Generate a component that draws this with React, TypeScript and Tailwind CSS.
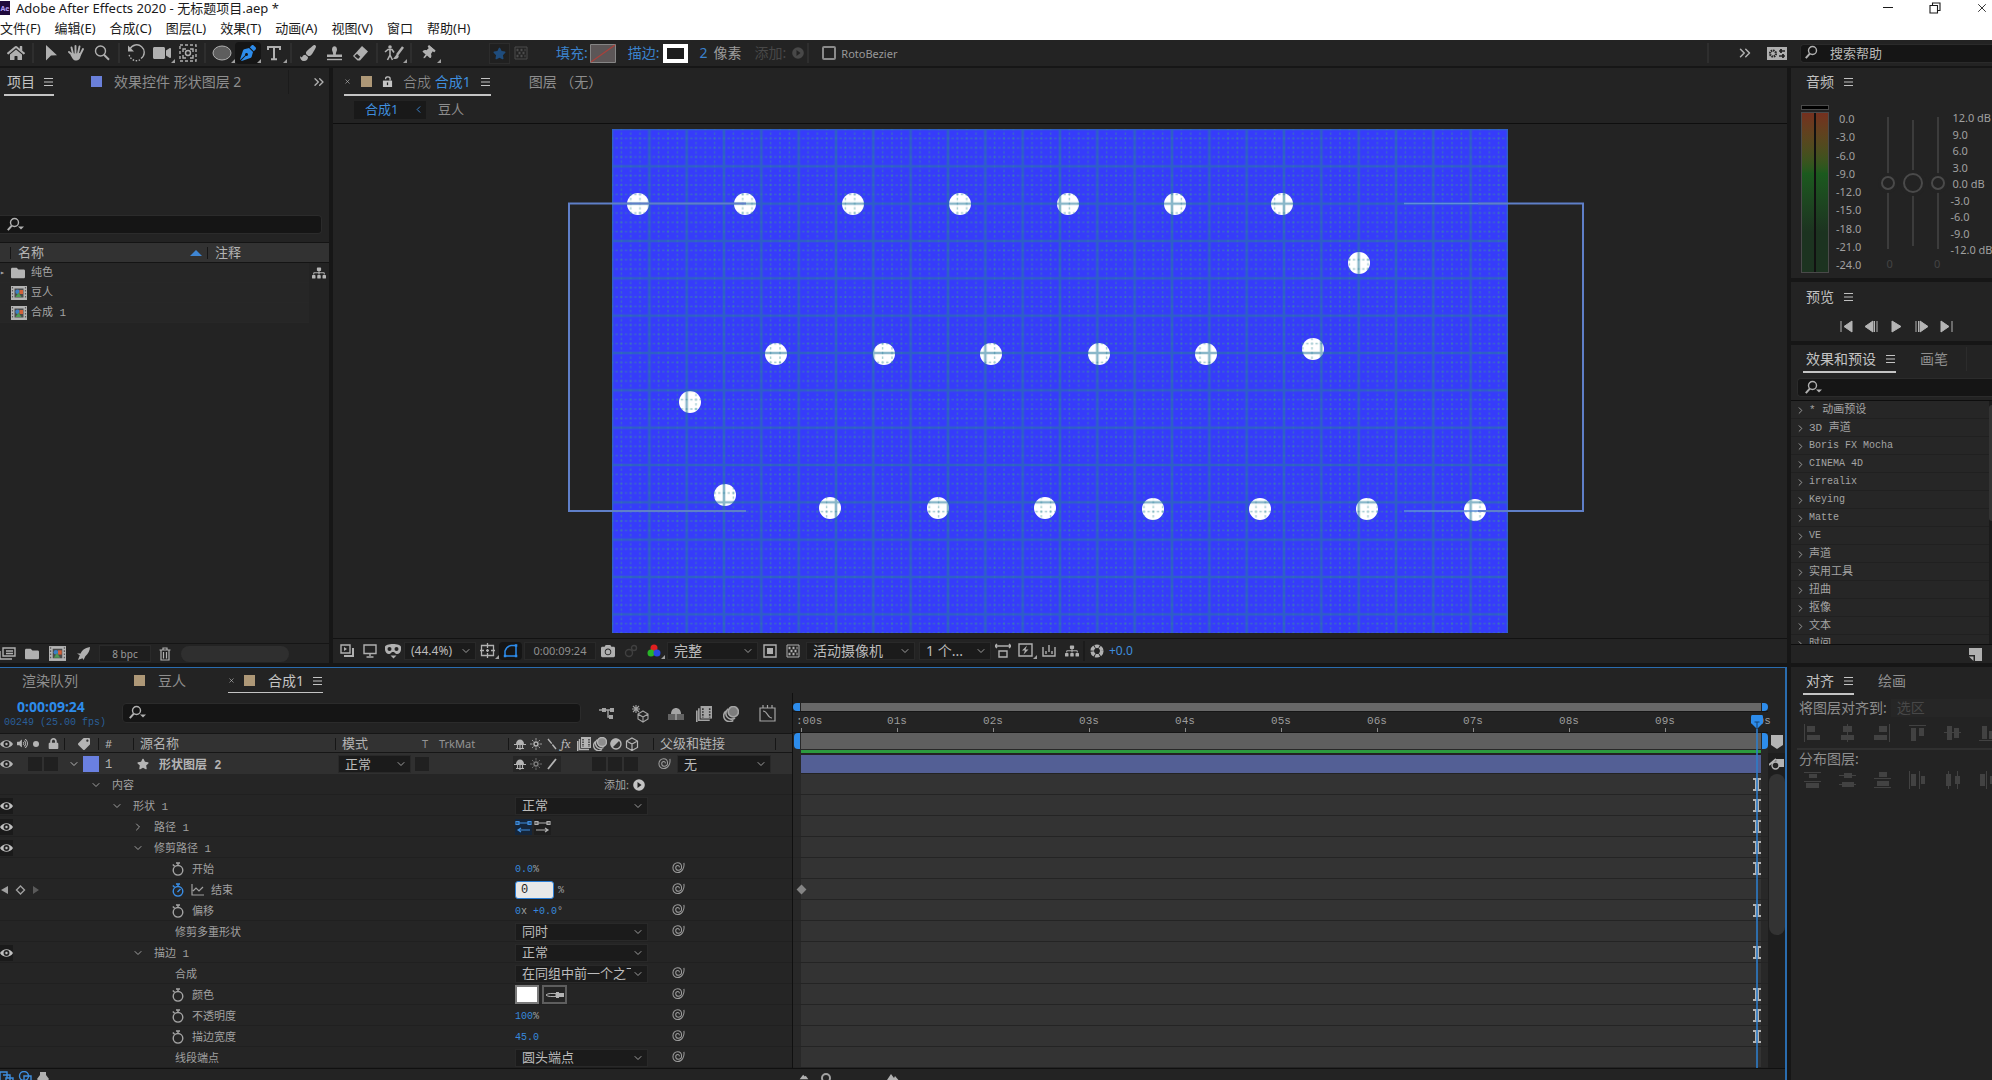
import { useState } from "react";
import type { ReactNode } from "react";
import { ChevronDown, ChevronRight, ChevronsRight, X } from "lucide-react";
import {
  FaCamera,
  FaFolder,
  FaHome,
  FaLock,
  FaPaintBrush,
  FaPenNib,
  FaSitemap,
  FaStar,
  FaTag,
  FaThumbtack,
  FaVideo,
  FaVolumeUp,
} from "react-icons/fa";

const FPS = 25;
const DURATION_FRAMES = 250;
const CURRENT_FRAME = 249;

// ────────── Icons ──────────

type IconProps = { className?: string };

function Icon({
  children,
  className = "size-4",
  box = "0 0 16 16",
}: {
  children: ReactNode;
  className?: string;
  box?: string;
}) {
  return (
    <svg viewBox={box} className={`shrink-0 ${className}`} fill="none" stroke="currentColor" strokeWidth="1.4" aria-hidden="true">
      {children}
    </svg>
  );
}

const MenuIcon = () => (
  <Icon className="size-[10px]" box="0 0 10 10">
    <path d="M0 1.5h9M0 5h9M0 8.5h9" strokeWidth="1.2" />
  </Icon>
);

const SearchIcon = ({ caret = false }: { caret?: boolean }) => (
  <Icon className="h-4 w-[18px]" box="0 0 18 16">
    <circle cx="7.5" cy="5.5" r="4" />
    <path d="M4.8 8.6 0.8 13.2" strokeWidth="2" />
    {caret && <path d="M11 9.5h6l-3 3z" fill="currentColor" stroke="none" />}
  </Icon>
);

const CompIcon = ({ className = "h-[14px] w-4" }: IconProps) => (
  <Icon className={className} box="0 0 16 14">
    <path d="M0 0h16v14H0z" fill="#b4b4b4" stroke="none" />
    <path d="M1.5 1v12M14.5 1v12" stroke="#5a5a5a" strokeWidth="1.2" strokeDasharray="1.5 1.5" />
    <path d="M3.5 2.5h9v9h-9z" fill="#4a4a4a" stroke="none" />
    <circle cx="6.5" cy="5.8" r="2.2" fill="#3b7fc4" stroke="none" />
    <path d="M8.5 4h3.5v4H8.5z" fill="#d2603a" stroke="none" />
    <path d="m7.5 6.5 3 4.5h-6z" fill="#4d9a55" stroke="none" />
  </Icon>
);

const EyeIcon = () => (
  <Icon className="h-3 w-[13px]" box="0 0 14 12">
    <path d="M0 6c3-5.5 11-5.5 14 0-3 5.5-11 5.5-14 0z" fill="currentColor" stroke="none" />
    <circle cx="7" cy="6" r="3.2" fill="#232323" stroke="none" />
    <circle cx="7" cy="6" r="1.3" fill="currentColor" stroke="none" />
  </Icon>
);

const StopwatchIcon = ({ active = false }: { active?: boolean }) => (
  <Icon className={active ? "size-[14px] text-[#3a8ee6]" : "size-[14px] text-[#a4a4a4]"} box="0 0 14 14">
    <circle cx="7" cy="8.3" r="4.8" />
    <path d="M7 3.5V1M5 1h4M1.8 2.5l1.8 1.8" />
    {active && <path d="m6.5 9 3-3" />}
  </Icon>
);

const PickwhipIcon = () => (
  <Icon className="size-[13px] text-[#9c9c9c]" box="0 0 14 14">
    <path
      d="M12.8 2c.9 5-2 10.5-6.6 10.5C3 12.500 1 10.200 1 7.200S3.200 2 6 2s4.300 2 4.300 4.500S8.600 10 6.800 10 4 8.900 4 7.200s1.100-2.400 2.200-2.400 1.800.8 1.600 2"
      strokeWidth="1.1"
    />
  </Icon>
);

const ShyIcon = () => (
  <Icon className="size-[14px]" box="0 0 14 14">
    <path d="M3 7c0-6 8-6 8 0z" fill="currentColor" stroke="none" />
    <path d="M1 7.5h12M7 7v6M3 11.5h8M4.5 8v4M9.5 8v4" strokeWidth="1.1" />
  </Icon>
);

const SunIcon = () => (
  <Icon className="size-[12px]" box="0 0 12 12">
    <circle cx="6" cy="6" r="2" />
    <path d="M6 0v2.5M6 9.5V12M0 6h2.5M9.5 6H12M2 2l1.5 1.5M8.5 8.5 10 10M2 10l1.5-1.5M8.5 3.5 10 2" strokeWidth="0.8" />
  </Icon>
);

const FrameBlendIcon = ({ className = "size-[14px]" }: IconProps) => (
  <Icon className={className} box="0 0 14 14">
    <path d="M4 0h10v11H4z" fill="currentColor" stroke="none" />
    <path d="M6 2v8M12 2v8" stroke="#323232" strokeDasharray="1.5 1" />
    <path d="M2.500 2v10.500H12M.7 4v10" />
  </Icon>
);

const MotionBlurIcon = ({ className = "size-[14px]" }: IconProps) => (
  <Icon className={className} box="0 0 14 14">
    <circle cx="9" cy="5" r="4.5" fill="currentColor" fillOpacity="0.7" />
    <path d="M4.500 2.500a5 5 0 0 0 6 8M2.500 4.500a5 5 0 0 0 6.500 8" />
  </Icon>
);

const CubeIcon = () => (
  <Icon className="size-[14px]" box="0 0 14 14">
    <path d="m7 1 5.500 3v6.500L7 13.500l-5.500-3V4zM1.500 4 7 7l5.500-3M7 7v6.500" strokeWidth="1.2" />
  </Icon>
);

const FlowIcon = () => <FaSitemap className="size-[14px] shrink-0" />;

const CheckerIcon = () => (
  <Icon className="size-[14px]" box="0 0 14 14">
    <path d="M1 1h12v12H1z" strokeWidth="1" />
    <path d="M2.500 4h9M2.500 10h9" strokeDasharray="2 2" strokeWidth="2.5" />
    <path d="M4.500 7h6" strokeDasharray="2 2" strokeWidth="2.5" />
  </Icon>
);

// ────────── Shared controls ──────────

function Sep() {
  return <span className="mx-[3px] h-5 w-[2px] shrink-0 bg-[#2e2e2e]" />;
}

function Tool({
  label,
  children,
  active = false,
  more = false,
  narrow = false,
}: {
  label: string;
  children: ReactNode;
  active?: boolean;
  more?: boolean;
  narrow?: boolean;
}) {
  return (
    <button
      aria-label={label}
      className={`relative flex shrink-0 items-center justify-center rounded-sm ${narrow ? "h-[18px] w-[23px]" : "h-[22px] w-[26px]"} ${
        active ? "bg-[#151515] text-[#2d8ceb]" : "text-[#b0b0b0]"
      }`}
    >
      {children}
      {more && (
        <svg viewBox="0 0 4 4" className="absolute right-0 bottom-[1px] size-1" fill="#a0a0a0" aria-hidden="true">
          <path d="M4 0v4H0z" />
        </svg>
      )}
    </button>
  );
}

function Select({
  label,
  options,
  className = "",
  textClass = "text-[13px]",
}: {
  label: string;
  options: string[];
  className?: string;
  textClass?: string;
}) {
  return (
    <div className={`relative flex h-[18px] shrink-0 items-center border border-[#292929] bg-[#1b1b1b] font-sans ${className}`}>
      <select aria-label={label} className={`h-full w-full appearance-none overflow-hidden bg-transparent pr-4 pl-[6px] leading-none text-[#bcbcbc] outline-none ${textClass}`}>
        {options.map((o) => (
          <option key={o}>{o}</option>
        ))}
      </select>
      <ChevronDown className="pointer-events-none absolute right-[3px] size-3 text-[#9c9c9c]" />
    </div>
  );
}

function PanelTab({ children, active = false, className = "" }: { children: ReactNode; active?: boolean; className?: string }) {
  return (
    <button
      className={`flex h-full shrink-0 items-center border-b-2 pt-px text-[14px] leading-none whitespace-nowrap ${
        active ? "border-[#c4c4c4] text-[#c4c4c4]" : "border-transparent text-[#8e8e8e]"
      } ${className}`}
    >
      {children}
    </button>
  );
}

// ────────── Window chrome ──────────

const menus = ["文件(F)", "编辑(E)", "合成(C)", "图层(L)", "效果(T)", "动画(A)", "视图(V)", "窗口", "帮助(H)"];

function TitleBar() {
  return (
    <header className="flex h-10 shrink-0 flex-col overflow-hidden bg-white text-[#1a1a1a]">
      <div className="flex h-4 items-center">
        <span className="flex h-[14px] w-[10px] items-center justify-center bg-[#1f0a3c] text-[7px] leading-none font-bold text-[#b29cf0]">
          Ae
        </span>
        <h1 className="ml-[6px] flex-1 text-[13px] leading-4 whitespace-nowrap">
          Adobe After Effects 2020 - 无标题项目.aep *
        </h1>
        <button aria-label="最小化" className="w-[47px]">
          <Icon className="mx-auto size-3" box="0 0 12 12">
            <path d="M1 5.500h10" strokeWidth="1" />
          </Icon>
        </button>
        <button aria-label="还原" className="w-[47px]">
          <Icon className="mx-auto size-3" box="0 0 12 12">
            <path d="M1 3.500h7.500V11H1zM3.500 3V1H11v7.500H9" strokeWidth="1.1" />
          </Icon>
        </button>
        <button aria-label="关闭" className="flex w-[34px] justify-center pl-[14px]">
          <X className="size-[14px]" strokeWidth={1.5} />
        </button>
      </div>
      <nav className="flex h-6 items-center gap-[14px] pt-px text-[13px] leading-none">
        {menus.map((m) => (
          <button key={m} className="whitespace-nowrap">
            {m}
          </button>
        ))}
      </nav>
    </header>
  );
}

function Toolbar() {
  return (
    <div className="flex h-7 shrink-0 items-center border-b-2 border-[#161616] bg-[#232323] pl-[3px]">
      <Tool label="主页"><FaHome className="size-[18px]" /></Tool>
      <Sep />
      <Tool label="选取工具">
        <Icon>
          <path d="m4 0 11 10.300-6 .3L4 15.500z" fill="currentColor" stroke="none" />
        </Icon>
      </Tool>
      <Tool label="手形工具">
        <Icon>
          <path d="M5 9 3.500 2.500M7.500 8V1M10 8.500 11.500 1.500M12 10l3-6M5.500 11 1 7" strokeWidth="1.9" strokeLinecap="round" />
          <path d="M4 8.500 12.500 8c.8 3-.5 7.500-4 7.500-3.500 0-4-2-6-5.500z" fill="currentColor" stroke="none" />
        </Icon>
      </Tool>
      <Tool label="缩放工具">
        <Icon>
          <circle cx="6.5" cy="6" r="5" />
          <path d="m10 9.800 5 5" strokeWidth="2" />
        </Icon>
      </Tool>
      <Sep />
      <Tool label="旋转工具">
        <Icon className="size-[18px]" box="0 0 18 18">
          <path d="M3 5a7.500 7.500 0 1 1 11 9.500" />
          <path d="M13 15.800A7.500 7.500 0 0 1 2 10" strokeDasharray="1.5 1.5" />
          <path d="M1 1.500v6h6z" fill="currentColor" stroke="none" />
        </Icon>
      </Tool>
      <Tool label="摄像机工具" more><FaVideo className="size-[18px]" /></Tool>
      <Tool label="锚点工具">
        <Icon className="size-[18px]" box="0 0 18 18">
          <path d="M1 1h16v16H1z" strokeDasharray="3 2" />
          <path d="M4 8V5h3M11 5h3v3M14 11v3h-3M7 14H4v-3" />
          <circle cx="9" cy="9" r="2.5" />
        </Icon>
      </Tool>
      <Sep />
      <Tool label="椭圆工具" more>
        <Icon className="h-4 w-5" box="0 0 20 16">
          <ellipse cx="10" cy="8" rx="9" ry="7" fill="#5e5e5e" strokeWidth="1" />
        </Icon>
      </Tool>
      <Tool label="钢笔工具" active more><FaPenNib className="size-[16px]" /></Tool>
      <Tool label="文字工具" more>
        <Icon>
          <path d="M2 5V2h12v3M8 2v12M5 14.300h6" strokeWidth="2" />
        </Icon>
      </Tool>
      <Sep />
      <Tool label="画笔工具"><FaPaintBrush className="size-[16px]" /></Tool>
      <Tool label="仿制图章工具">
        <Icon className="size-[17px]" box="0 0 17 17">
          <path d="M6 4.500C6 0 11 0 11 4.500 11 6.500 9.800 7 9.800 9.500H16V12H1V9.500h6.200C7.200 7 6 6.500 6 4.500z" fill="currentColor" stroke="none" />
          <path d="M1 14.500h15" />
        </Icon>
      </Tool>
      <Tool label="橡皮擦工具">
        <Icon className="size-[17px]" box="0 0 17 17">
          <path d="m10 1 6 5.500-8 9H5.500L1 11z" fill="currentColor" stroke="none" />
          <path d="m2.500 11 2.500-2.300 3.200 3-2 2.300z" fill="#232323" stroke="none" />
        </Icon>
      </Tool>
      <Sep />
      <Tool label="Roto 笔刷工具" more>
        <Icon className="h-4 w-5" box="0 0 20 16">
          <circle cx="6" cy="2" r="1.8" fill="currentColor" stroke="none" />
          <path d="M1 7l3-2.500h4l2 3M6 5v5l-2.500 5M6 10l2.500 5" strokeWidth="1.6" />
          <path d="m19 2-6 8" strokeWidth="2.5" />
          <path d="M13.500 9.500c-2 0-2.500 3-4.500 4 3 1.500 5.500 0 5.800-2.500z" fill="currentColor" stroke="none" />
        </Icon>
      </Tool>
      <Sep />
      <Tool label="操控点工具" more><FaThumbtack className="size-[14px] rotate-[40deg]" /></Tool>

      <span className="ml-[26px]"><Sep /></span>
      <span className="ml-4 flex size-[21px] items-center justify-center border border-[#2c2c2c] bg-[#202020] text-[#1f4c7c]">
        <FaStar className="size-[13px]" />
      </span>
      <span className="ml-1 text-[#4c4c4c]"><CheckerIcon /></span>
      <span className="ml-[18px]"><Sep /></span>
      <button className="ml-1 text-[14px] leading-none text-[#3b82cc]">填充:</button>
      <button aria-label="填充颜色" className="ml-[2px] shrink-0">
        <svg viewBox="0 0 26 19" className="h-[19px] w-[26px]" aria-hidden="true">
          <path d="M.5.5h25v18H.5z" fill="#5c5657" stroke="#858585" />
          <path d="M1 18 25 1" stroke="#a8413b" strokeWidth="1.3" />
        </svg>
      </button>
      <button className="ml-3 text-[14px] leading-none text-[#3b82cc]">描边:</button>
      <button aria-label="描边颜色" className="ml-[3px] h-[19px] w-[25px] shrink-0 border-4 border-white bg-[#1c1c1c]" />
      <span className="ml-3 flex gap-[6px] text-[14px] leading-none text-[#9c9c9c]">
        <b className="font-normal text-[#3b82cc]">2</b>像素
      </span>
      <span className="ml-[13px] flex items-center gap-[6px] text-[14px] leading-none text-[#484848]">
        添加:
        <svg viewBox="0 0 12 12" className="size-3" aria-hidden="true">
          <circle cx="6" cy="6" r="5.8" fill="#484848" />
          <path d="m4.500 3 4 3-4 3z" fill="#232323" />
        </svg>
      </span>
      <Sep />
      <label className="ml-[10px] flex items-center gap-[5px] text-[11px] leading-none text-[#989898]">
        <input type="checkbox" className="size-[14px] appearance-none rounded-[2px] border-2 border-[#8a8a8a] bg-transparent" />
        RotoBezier
      </label>

      <span className="ml-auto" />
      <Sep />
      <button aria-label="更多工作区" className="ml-6 text-[#b0b0b0]"><ChevronsRight className="size-[18px]" /></button>
      <span className="ml-[3px]"><Sep /></span>
      <button aria-label="工作区" className="ml-1">
        <svg viewBox="0 0 20 13" className="h-[13px] w-5" aria-hidden="true">
          <path d="M0 0h20v13H0z" fill="#b0b0b0" />
          <circle cx="6" cy="6.5" r="3" fill="none" stroke="#232323" strokeWidth="2.2" strokeDasharray="1.6 0.7" />
          <path d="M12 4h6M12 9h6" stroke="#232323" strokeWidth="1.3" />
          <path d="M14 2v4M16 7v4" stroke="#232323" strokeWidth="1.8" />
        </svg>
      </button>
      <label className="ml-[13px] flex h-[19px] w-[192px] items-center gap-[7px] rounded-l-sm border border-r-0 border-[#2a2a2a] bg-[#151515] pl-1 text-[#b0b0b0]">
        <SearchIcon />
        <input aria-label="搜索帮助" placeholder="搜索帮助" className="w-full bg-transparent text-[13px] leading-none outline-none placeholder:text-[#b8b8b8]" />
      </label>
    </div>
  );
}

// ────────── Project panel ──────────

function ProjectPanel() {
  return (
    <section className="flex w-[329px] shrink-0 flex-col bg-[#232323]">
      <div className="flex h-7 items-center">
        <PanelTab active className="ml-1 gap-[9px] pl-[3px]">项目 <MenuIcon /></PanelTab>
        <PanelTab className="ml-[37px]">
          <span className="mr-3 size-[11px] bg-[#6a80da]" />
          效果控件 形状图层 2
        </PanelTab>
        <span className="ml-auto h-6 w-px bg-[#1b1b1b]" />
        <button aria-label="更多面板" className="mr-[2px] ml-[22px] text-[#b0b0b0]"><ChevronsRight className="size-4" /></button>
      </div>
      <label className="mt-[119px] mr-[7px] flex h-[19px] items-center rounded-r-sm border border-l-0 border-[#2b2b2b] bg-[#151515] pl-[7px] text-[#b0b0b0]">
        <SearchIcon caret />
        <input aria-label="搜索项目" className="w-full bg-transparent text-[12px] outline-none" />
      </label>
      <div className="mt-2 flex h-[21px] items-center border-y border-[#141414] bg-[#323232] text-[13px] leading-none text-[#b4b4b4]">
        <span className="ml-[10px] h-3 w-px bg-[#161616]" />
        <span className="ml-[7px] w-[172px]">名称</span>
        <svg viewBox="0 0 12 6" className="h-[6px] w-3" fill="#3f86d4" aria-hidden="true">
          <path d="m6 0 6 6H0z" />
        </svg>
        <span className="ml-[5px] h-3 w-px bg-[#161616]" />
        <span className="ml-[7px]">注释</span>
      </div>
      <div className="flex flex-1">
        <ul className="w-[309px] font-mono text-[11px] leading-none text-[#a4a4a4]">
          <li className="flex h-5 items-center gap-[6px] border-b border-[#272727] bg-[#262626]">
            <span className="w-[5px] text-[8px]">▸</span>
            <FaFolder className="size-[14px] text-[#b4b4b4]" />
            <span className="pt-px">纯色</span>
          </li>
          <li className="flex h-5 items-center gap-1 border-b border-[#272727] bg-[#262626] pl-[11px]">
            <CompIcon /> <span className="pt-[2px]">豆人</span>
          </li>
          <li className="flex h-5 items-center gap-1 border-b border-[#272727] bg-[#262626] pl-[11px]">
            <CompIcon /> <span className="pt-[2px]">合成 1</span>
          </li>
        </ul>
        <span className="mt-[3px] ml-[3px] text-[#b4b4b4]"><FlowIcon /></span>
      </div>
      <div className="flex h-5 shrink-0 items-center border-t border-[#151515] text-[#b0b0b0]">
        <button aria-label="解释素材" className="w-[22px]">
          <Icon className="h-[13px] w-4" box="0 0 16 13">
            <path d="M3 1h12v8H3zM0 4v8h12" />
            <path d="M6 4h7M6 6.500h7" />
          </Icon>
        </button>
        <button aria-label="新建文件夹" className="flex w-5 justify-center"><FaFolder className="size-[14px]" /></button>
        <button aria-label="新建合成" className="ml-[7px] w-[22px]"><CompIcon className="h-[15px] w-[17px]" /></button>
        <button aria-label="项目设置" className="ml-[6px] w-5">
          <Icon className="size-[13px]" box="0 0 14 14">
            <path d="M14 0C8 1 5 4 4 7H0l3 2-2 5 5-2 1 2 2-4c3-3 5-6 5-10z" fill="currentColor" stroke="none" />
          </Icon>
        </button>
        <button className="ml-[2px] h-[17px] w-[52px] border border-[#2a2a2a] bg-[#1e1e1e] text-[10px] leading-none text-[#9a9a9a]">8 bpc</button>
        <button aria-label="删除" className="ml-2">
          <Icon className="h-[14px] w-3" box="0 0 12 14">
            <path d="M.5 3h11M4 3V1h4v2M2 3.500V13h8V3.500M4.500 5v6.500M7.500 5v6.500" strokeWidth="1.2" />
          </Icon>
        </button>
        <span className="ml-[10px] h-4 w-[108px] rounded-full bg-[#2f2f2f]" />
      </div>
    </section>
  );
}

// ────────── Composition viewer ──────────

const COMP_W = 896;
const COMP_H = 504;
const GRID = COMP_W / 24;

const beads: [number, number][] = [
  [26, 75], [133, 75], [241, 75], [348, 75], [456, 75], [563, 75], [670, 75],
  [747, 134],
  [164, 225], [272, 225], [379, 225], [487, 225], [594, 225], [701, 220],
  [78, 273],
  [113, 366], [218, 379], [326, 379], [433, 379], [541, 380], [648, 380], [755, 380], [863, 381],
];

function GridOverlay() {
  const q = GRID / 4;
  return (
    <>
      <defs>
        <pattern id="comp-grid" width={GRID} height={GRID} patternUnits="userSpaceOnUse">
          {[1, 2, 3].map((i) => (
            <path
              key={i}
              d={`M${i * q} 0V${GRID}M0 ${i * q}H${GRID}`}
              stroke="#3c909c"
              strokeOpacity="0.5"
              strokeDasharray={`${q / 4} ${q / 4}`}
              strokeDashoffset={q / 8}
              strokeWidth="1.3"
            />
          ))}
          <path d={`M0 0V${GRID}M0 0H${GRID}M${GRID} 0V${GRID}M0 ${GRID}H${GRID}`} stroke="#287c9c" strokeOpacity="0.55" strokeWidth="2.6" />
        </pattern>
      </defs>
      <rect width={COMP_W} height={COMP_H} fill="url(#comp-grid)" />
    </>
  );
}

function CompositionViewer() {
  return (
    <section className="flex min-w-0 flex-1 flex-col bg-[#232323]">
      <div className="flex h-7 items-center">
        <PanelTab active className="ml-[11px] gap-[10px]">
          <X className="size-[7px]" />
          <span className="size-[11px] bg-[#ae9877]" />
          <Icon className="size-[11px]" box="0 0 12 12">
            <path d="M1 5h10v7H1z" fill="currentColor" stroke="none" />
            <path d="M4 3.500V2.500C4 .3 8.800.3 8.800 2.500V5" />
            <path d="M6 7v3" stroke="#232323" />
          </Icon>
          <span className="font-light text-[#9c9c9c]">
            合成 <span className="font-normal text-[#3f8ede]">合成1</span>
          </span>
          <MenuIcon />
        </PanelTab>
        <PanelTab className="ml-[38px]">图层 （无）</PanelTab>
      </div>
      <div className="flex h-[28px] shrink-0 items-center border-b border-[#0e0e0e] pl-[21px] text-[13px] leading-none">
        <button className="flex h-[18px] w-[72px] items-center justify-between bg-[#191919] pr-[2px] pl-[11px] text-[#3f8ede]">
          合成1 <ChevronDown className="size-[11px] rotate-90" />
        </button>
        <button className="ml-3 text-[#8e8e8e]">豆人</button>
      </div>
      <div className="min-h-0 flex-1 overflow-hidden">
        <svg viewBox="-279 -5 1454 514" className="h-full w-full" role="img" aria-label="合成 1">
          <rect width={COMP_W} height={COMP_H} fill="#363cfa" />
          {beads.map(([x, y]) => (
            <circle key={`${x}-${y}`} cx={x} cy={y} r="11" fill="#fff" />
          ))}
          <GridOverlay />
          <path d="M134 74.500H-43V382H134M866 74.500H971V382H866" fill="none" stroke="#5f7fc8" strokeWidth="2" />
          <path d="M792 74.500H866M792 382H866" stroke="#5f8fd8" strokeWidth="1.5" />
        </svg>
      </div>
      <ViewerBar />
    </section>
  );
}

function ViewerBar() {
  return (
    <div className="flex h-[25px] shrink-0 items-center border-t border-[#121212] pb-px pl-[2px] text-[#b0b0b0]">
      <Tool narrow label="始终预览此视图">
        <Icon className="size-[14px]" box="0 0 14 14">
          <path d="M1 1h9v8H1z" />
          <path d="m4 3 3 2-3 2zM12 4v7H4v2h10V4z" fill="currentColor" stroke="none" />
        </Icon>
      </Tool>
      <Tool narrow label="主查看器">
        <Icon className="size-[14px]" box="0 0 14 14">
          <path d="M1 1h12v8.500H1zM7 9.500V12M3.500 13h7" />
        </Icon>
      </Tool>
      <Tool narrow label="VR 视图">
        <Icon className="size-4">
          <path d="M0 4c0-4 16-4 16 0v3c-1 5-5 5-7 2H7c-2 3-6 3-7-2z" fill="currentColor" stroke="none" />
          <circle cx="4.5" cy="6" r="2" fill="#232323" stroke="none" />
          <circle cx="11.5" cy="6" r="2" fill="#232323" stroke="none" />
          <path d="M5.500 12.500h6l-3 3z" fill="currentColor" stroke="none" />
        </Icon>
      </Tool>
      <Select label="放大率" options={["(44.4%)"]} className="w-[72px]" textClass="text-[12px]" />
      <Tool narrow label="网格和参考线" more>
        <Icon className="size-[15px]" box="0 0 15 15">
          <path d="M1.500 2.500h12v10h-12zM7.500 0v5M7.500 10v5M0 7.500h4M11 7.500h4M6 7.500h3M7.500 6v3" strokeWidth="1.3" />
        </Icon>
      </Tool>
      <Tool narrow label="切换蒙版和形状路径可见性" active>
        <Icon>
          <path d="M2 13V8c1-3 3-5 6-5.500h5V13z" strokeWidth="1.5" />
          <path d="M.8 11.800h2.500v2.500H.8zM11.800 11.800h2.500v2.500h-2.500zM11.800 1.200h2.500v2.500h-2.500z" fill="currentColor" stroke="none" />
        </Icon>
      </Tool>
      <button className="ml-[2px] h-[18px] w-[72px] shrink-0 border border-[#292929] bg-[#1e1e1e] text-[11px] leading-none text-[#909090]">0:00:09:24</button>
      <Tool narrow label="拍摄快照"><FaCamera className="size-[14px]" /></Tool>
      <Tool narrow label="显示快照">
        <Icon className="size-[14px] text-[#404040]" box="0 0 14 14">
          <circle cx="5" cy="9" r="3.5" />
          <circle cx="10" cy="4" r="2.5" />
        </Icon>
      </Tool>
      <Tool narrow label="显示通道" more>
        <svg viewBox="0 0 14 14" className="size-[14px]" aria-hidden="true">
          <circle cx="7" cy="4" r="3.5" fill="#e02020" />
          <circle cx="4" cy="9" r="3.5" fill="#28b428" />
          <circle cx="10" cy="9" r="3.5" fill="#2848e0" />
        </svg>
      </Tool>
      <Select label="分辨率" options={["完整"]} className="ml-[2px] w-[91px]" textClass="text-[14px]" />
      <Tool narrow label="目标区域">
        <Icon className="size-[14px]" box="0 0 14 14">
          <path d="M1 1h12v12H1z" />
          <path d="M4 4h6v6H4z" fill="currentColor" stroke="none" />
        </Icon>
      </Tool>
      <Tool narrow label="切换透明网格"><CheckerIcon /></Tool>
      <Select label="3D 视图" options={["活动摄像机"]} className="ml-[2px] w-[109px]" textClass="text-[14px]" />
      <Select label="视图布局" options={["1 个..."]} className="ml-1 w-[72px]" textClass="text-[14px]" />
      <Tool narrow label="像素长宽比校正">
        <Icon>
          <path d="M4 8h8v6H4zM0 3h16M2 1 0 3l2 2M14 1l2 2-2 2" />
        </Icon>
      </Tool>
      <Tool narrow label="快速预览" more>
        <Icon className="size-[15px]" box="0 0 15 15">
          <path d="M1 1h13v12H1z" />
          <path d="m9 2.500-5 5h3l-1.500 4 5-5h-3z" fill="currentColor" stroke="none" />
        </Icon>
      </Tool>
      <Tool narrow label="时间轴">
        <Icon className="size-[14px]" box="0 0 14 14">
          <path d="M1 3v9h12V3M4 7v3M7 1v7M10 7v3" />
        </Icon>
      </Tool>
      <Tool narrow label="合成流程图"><FlowIcon /></Tool>
      <span className="h-5 w-[2px] bg-[#1b1b1b]" />
      <Tool narrow label="重置曝光度">
        <Icon className="size-[14px]" box="0 0 14 14">
          <circle cx="7" cy="7" r="4.8" strokeWidth="3.6" strokeDasharray="4.2 0.8" />
        </Icon>
      </Tool>
      <span className="ml-px text-[12px] leading-none text-[#3f8ede]">+0.0</span>
    </div>
  );
}

// ────────── Timeline ──────────

type Row = {
  label: string;
  indent: string;
  twirl?: "open" | "closed";
  eye?: boolean;
  watch?: "idle" | "active";
  whip?: boolean;
  beam?: boolean;
  value?: ReactNode;
};

const Num = ({ children }: { children: ReactNode }) => <span className="text-[#3789de]">{children}</span>;

const rows: Row[] = [
  {
    label: "内容",
    indent: "pl-[30px]",
    twirl: "open",
    beam: true,
    value: (
      <button className="ml-[89px] flex items-center gap-1 font-sans text-[11px] text-[#a4a4a4]">
        添加:
        <svg viewBox="0 0 12 12" className="size-3" aria-hidden="true">
          <circle cx="6" cy="6" r="5.8" fill="#c4c4c4" />
          <path d="m4.500 3 4 3-4 3z" fill="#232323" />
        </svg>
      </button>
    ),
  },
  { label: "形状 1", indent: "pl-[51px]", twirl: "open", eye: true, beam: true, value: <Select label="形状模式" options={["正常"]} className="w-[133px]" /> },
  {
    label: "路径 1",
    indent: "pl-[72px]",
    twirl: "closed",
    eye: true,
    beam: true,
    value: (
      <span className="flex gap-[2px]">
        <Icon className="h-4 w-[17px] bg-[#14253a] text-[#3f8ede]" box="0 0 17 16">
          <path d="M2 4h13M3 11h12M6 9l-3 2 3 2M1 2.500h3v3H1zM13 2.500h3v3h-3z" strokeWidth="1.2" />
        </Icon>
        <Icon className="h-4 w-[17px] bg-[#1e1e1e] text-[#b0b0b0]" box="0 0 17 16">
          <path d="M2 4h13M2 11h12M11 9l3 2-3 2M1 2.500h3v3H1zM13 2.500h3v3h-3z" strokeWidth="1.2" />
        </Icon>
      </span>
    ),
  },
  { label: "修剪路径 1", indent: "pl-[72px]", twirl: "open", eye: true, beam: true },
  { label: "开始", indent: "pl-[111px]", watch: "idle", whip: true, beam: true, value: <span className="pt-[2px]"><Num>0.0</Num>%</span> },
  { label: "结束", indent: "pl-[111px]", watch: "active", whip: true, value: <EndInput /> },
  { label: "偏移", indent: "pl-[111px]", watch: "idle", whip: true, beam: true, value: <span className="pt-[2px]"><Num>0</Num>x <Num>+0.0</Num>°</span> },
  { label: "修剪多重形状", indent: "pl-[115px]", whip: true, value: <Select label="修剪多重形状" options={["同时"]} className="w-[133px]" /> },
  { label: "描边 1", indent: "pl-[72px]", twirl: "open", eye: true, beam: true, value: <Select label="描边模式" options={["正常"]} className="w-[133px]" /> },
  { label: "合成", indent: "pl-[115px]", whip: true, value: <Select label="合成" options={["在同组中前一个之下"]} className="w-[133px]" /> },
  {
    label: "颜色",
    indent: "pl-[111px]",
    watch: "idle",
    whip: true,
    beam: true,
    value: (
      <span className="flex gap-[3px]">
        <button aria-label="描边颜色" className="h-[19px] w-6 border-2 border-[#7a7a7a] bg-white" />
        <button aria-label="吸管" className="flex h-[19px] w-[25px] items-center justify-center border-2 border-[#5e5e5e] text-[#b4b4b4]">
          <Icon className="h-2 w-5" box="0 0 20 8">
            <path d="M1 4c2-2 6-1.500 10-1.500v3C7 5.500 3 6 1 4z" strokeWidth="1" />
            <path d="M11 1h3v1h5v4h-5v1h-3z" fill="currentColor" stroke="none" />
          </Icon>
        </button>
      </span>
    ),
  },
  { label: "不透明度", indent: "pl-[111px]", watch: "idle", whip: true, beam: true, value: <span className="pt-[2px]"><Num>100</Num>%</span> },
  { label: "描边宽度", indent: "pl-[111px]", watch: "idle", whip: true, beam: true, value: <span className="pt-[2px]"><Num>45.0</Num></span> },
  { label: "线段端点", indent: "pl-[115px]", whip: true, value: <Select label="线段端点" options={["圆头端点"]} className="w-[133px]" /> },
];

function EndInput() {
  const [end, setEnd] = useState("0");
  return (
    <label className="flex items-center gap-1">
      <input
        aria-label="结束"
        value={end}
        onChange={(e) => setEnd(e.target.value)}
        className="h-[18px] w-[39px] rounded-[3px] border border-[#2d7fd6] bg-[#e8e8e8] pl-[5px] text-[12px] text-[#222] outline-none"
      />
      <span className="pt-[2px]">%</span>
    </label>
  );
}

function PropertyRow({ row }: { row: Row }) {
  return (
    <div className="flex h-[21px] items-center border-b border-[#202020] pt-px font-mono text-[11px] leading-none text-[#a0a0a0]">
      <div className="flex w-[60px] shrink-0 items-center gap-[6px]">
        {row.eye && <span className="flex h-4 w-[13px] items-center bg-[#1a1a1a] text-[#c0c0c0]"><EyeIcon /></span>}
        {row.watch === "active" && (
          <Icon className="h-[10px] w-10" box="0 0 40 10">
            <path d="M8 1v8L1 5z" fill="currentColor" stroke="none" />
            <path d="m20.500 1 4 4-4 4-4-4z" />
            <path d="M33 1v8l6-4z" fill="#5a5a5a" stroke="none" />
          </Icon>
        )}
      </div>
      <div className={`flex w-[455px] shrink-0 items-center ${row.indent}`}>
        {row.twirl === "open" && <ChevronDown className="mr-[10px] size-3" />}
        {row.twirl === "closed" && <ChevronRight className="mr-[10px] size-3" />}
        {row.watch && <StopwatchIcon active={row.watch === "active"} />}
        {row.watch === "active" && (
          <Icon className="ml-[6px] size-[13px]" box="0 0 13 13">
            <path d="M1 1v11h12M2 8l3-3 3 3 4-4" strokeWidth="1.2" />
          </Icon>
        )}
        <span className={row.watch ? "ml-[7px] pt-[3px]" : "pt-[3px]"}>{row.label}</span>
      </div>
      <div className="flex w-[157px] shrink-0 items-center text-[10px]">{row.value}</div>
      {row.whip && <span className="pb-[3px]"><PickwhipIcon /></span>}
    </div>
  );
}

const headSep = <span className="h-3 w-px shrink-0 bg-[#161616]" />;

function OutlineHeader() {
  return (
    <div className="flex h-5 shrink-0 items-center border-y border-[#161616] bg-[#323232] pt-px text-[13px] leading-none text-[#b4b4b4]">
      <span className="flex w-16 items-center gap-1">
        <EyeIcon />
        <FaVolumeUp className="size-[11px]" />
        <span className="ml-px size-[6px] rounded-full bg-[#b4b4b4]" />
        <FaLock className="ml-[5px] size-[11px]" />
      </span>
      {headSep}
      <span className="flex w-[33px] justify-center pl-1"><FaTag className="size-3 rotate-90" /></span>
      {headSep}
      <span className="w-[34px] pl-[6px] text-[11px]">#</span>
      {headSep}
      <span className="w-[201px] pl-[6px]">源名称</span>
      {headSep}
      <span className="w-[82px] pl-[6px]">模式</span>
      <span className="w-[19px] pl-1 text-[11px] text-[#949494]">T</span>
      <span className="w-[71px] pl-[2px] text-[11px] text-[#949494]">TrkMat</span>
      {headSep}
      <span className="flex w-[144px] items-center gap-[2px] pl-[4px]">
        <ShyIcon />
        <span className="mx-px"><SunIcon /></span>
        <Icon className="size-[14px]" box="0 0 14 14"><path d="m3 2 8 10" strokeDasharray="6 1" /></Icon>
        <i className="w-[14px] font-serif text-[13px]">fx</i>
        <FrameBlendIcon />
        <MotionBlurIcon />
        <Icon className="size-[14px]" box="0 0 14 14">
          <circle cx="7" cy="7" r="5" />
          <path d="M10.500 3.500A5 5 0 1 0 3.500 10.500z" fill="currentColor" stroke="none" />
        </Icon>
        <CubeIcon />
      </span>
      {headSep}
      <span className="w-[121px] pl-[6px]">父级和链接</span>
      {headSep}
    </div>
  );
}

function LayerRow() {
  return (
    <div className="flex h-[21px] items-center bg-[#303030] pt-px text-[12px] leading-none text-[#b4b4b4]">
      <span className="flex w-[28px] items-center"><EyeIcon /></span>
      <span className="size-[14px] bg-[#202020]" />
      <span className="ml-[2px] size-[14px] bg-[#202020]" />
      <ChevronDown className="ml-[10px] size-3" />
      <span className="ml-[3px] h-4 w-4 bg-[#6a80e0]" />
      <span className="ml-[6px] w-[32px] pt-[2px] font-mono text-[12px]">1</span>
      <FaStar className="size-3" />
      <b className="ml-[10px] w-[179px] pt-[3px] font-mono text-[12px]">形状图层 2</b>
      <Select label="图层模式" options={["正常"]} className="w-[73px]" />
      <span className="ml-1 size-[14px] bg-[#202020]" />
      <span className="ml-[84px] flex h-4 w-[48px] items-center gap-[2px] bg-[#262626]">
        <ShyIcon />
        <span className="mx-px text-[#7c7c7c]"><SunIcon /></span>
        <Icon className="size-[14px]" box="0 0 14 14"><path d="m3 12 8-10" strokeWidth="1.8" /></Icon>
      </span>
      <span className="ml-[31px] flex gap-[2px]">
        <span className="size-[14px] bg-[#202020]" />
        <span className="size-[14px] bg-[#202020]" />
        <span className="size-[14px] bg-[#202020]" />
      </span>
      <span className="ml-5 pb-[2px]"><PickwhipIcon /></span>
      <Select label="父级" options={["无"]} className="ml-[6px] w-[94px]" />
    </div>
  );
}

function TimelineOutline() {
  return (
    <div className="flex w-[793px] shrink-0 flex-col border-r border-[#101010] bg-[#252525]">
      <div className="flex h-10 shrink-0 items-center bg-[#232323]">
        <div className="w-[122px] shrink-0 pt-[2px]">
          <div className="pl-[17px] text-[14px] leading-[18px] font-bold text-[#2d8ceb]">0:00:09:24</div>
          <div className="pl-1 font-mono text-[10px] leading-[14px] whitespace-nowrap text-[#2a5f98]">
            00249 ({FPS}.00 fps)
          </div>
        </div>
        <label className="flex h-5 w-[459px] items-center rounded-sm border border-[#2b2b2b] bg-[#151515] pl-[6px] text-[#b0b0b0]">
          <SearchIcon caret />
          <input aria-label="搜索图层" className="w-full bg-transparent text-[12px] outline-none" />
        </label>
        <div className="ml-[17px] flex pt-px text-[#a4a4a4]">
          <button aria-label="合成微型流程图" className="mr-[18px]">
            <Icon>
              <path d="M1 4h4M8 4h2v7h2M8 4h4" />
              <path d="M4 2h4v4H4zM12 2h4v4h-4zM11 9h4v4h-4z" fill="currentColor" stroke="none" />
            </Icon>
          </button>
          <button aria-label="草图 3D" className="mr-[18px]">
            <Icon className="size-[18px]" box="0 0 18 18">
              <path d="m11 6 5 3v5l-5 3-5-3V9zM6 9l5 3 5-3M11 12v5M4 0v8M0 4h8M1 1l6 6M7 1 1 7" strokeWidth="1.1" />
            </Icon>
          </button>
          <button aria-label="隐藏图层" className="mr-[12px]">
            <Icon>
              <path d="M3 8c0-8 10-8 10 0z" fill="currentColor" stroke="none" />
              <path d="M0 8h16v6H0z" fill="currentColor" fillOpacity="0.5" stroke="none" />
              <path d="M8 6v8" />
            </Icon>
          </button>
          <button aria-label="帧混合" className="mr-[11px]"><FrameBlendIcon className="size-4" /></button>
          <button aria-label="运动模糊" className="mr-5"><MotionBlurIcon className="size-4" /></button>
          <button aria-label="图表编辑器">
            <Icon className="size-[17px]" box="0 0 17 17">
              <path d="M1 3h15v13H1zM4 0v3M8.500 0v3M13 0v3M4 6c5 0 4 7 9 7" strokeWidth="1.2" />
            </Icon>
          </button>
        </div>
      </div>
      <OutlineHeader />
      <LayerRow />
      {rows.map((row) => (
        <PropertyRow key={row.label} row={row} />
      ))}
    </div>
  );
}

const seconds = Array.from({ length: DURATION_FRAMES / FPS }, (_, i) => i);

function TimelineTracks() {
  return (
    <div className="relative flex min-w-0 flex-1 flex-col bg-[#282828]">
      <div className="flex h-[18px] shrink-0 bg-[#232323] pt-[10px]">
        <span className="w-[7px] rounded-l-full bg-[#2d8ceb]" />
        <span className="ml-px flex-1 bg-[#686868]" />
        <span className="ml-px w-[6px] rounded-r-full bg-[#2d8ceb]" />
      </div>
      <div className="flex h-[22px] shrink-0 border-y border-[#161616] bg-[#232323] pr-[7px] pl-2 font-mono text-[11px] text-[#9c9c9c]">
        {seconds.map((s) => (
          <span key={s} className="flex flex-1 flex-col justify-between leading-none">
            <span className={s === 0 ? "-ml-[5px] pt-1" : "w-max -translate-x-1/2 pt-1"}>
              {s === 0 ? ":00s" : `0${s}s`}
            </span>
            <span className="h-1 w-px bg-[#8a8a8a]" />
          </span>
        ))}
        <span className="w-0 pt-1 leading-none whitespace-nowrap">
          <span className="block -translate-x-[10px]">10s</span>
        </span>
      </div>
      <div className="flex h-4 shrink-0">
        <span className="ml-px w-[6px] rounded-l-sm bg-[#2d8ceb]" />
        <span className="ml-px flex-1 bg-[#5f5f5f]" />
        <span className="ml-px w-[6px] rounded-r-sm bg-[#2d8ceb]" />
      </div>
      <div className="mt-px mr-[7px] ml-2 h-[3px] shrink-0 bg-[#2c9a3e]" />
      <div className="mr-[7px] ml-2 h-[21px] shrink-0 border-t-2 border-b border-[#232323] bg-[#535f95]" />
      {rows.map((row) => (
        <div key={row.label} className="flex h-[21px] shrink-0 border-b border-[#242424] pr-[7px] pl-2">
          <div className="relative flex-1 bg-[#333]">
            {row.watch === "active" && <span className="absolute top-[7px] -left-[3px] size-[7px] rotate-45 bg-[#848484]" />}
            {row.beam && (
              <svg
                viewBox="0 0 8 13"
                className="absolute top-1 h-[13px] w-2 -translate-x-1/2"
                style={{ left: `${(CURRENT_FRAME / DURATION_FRAMES) * 100}%` }}
                fill="none"
                stroke="#b4b4b4"
                aria-hidden="true"
              >
                <path d="M0 1h8M0 12h8" strokeWidth="2" />
                <path d="M4 1v11" strokeWidth="4" />
              </svg>
            )}
          </div>
        </div>
      ))}
      {/* playhead */}
      <div className="pointer-events-none absolute inset-y-0 right-[7px] left-2">
        <div
          className="absolute top-[22px] bottom-0 flex w-3 -translate-x-1/2 flex-col items-center"
          style={{ left: `${(CURRENT_FRAME / DURATION_FRAMES) * 100}%` }}
        >
          <svg viewBox="0 0 12 14" className="h-[14px] w-3 shrink-0" aria-hidden="true">
            <path d="M1 0h10q1 0 1 2v6l-6 6-6-6V2q0-2 1-2z" fill="#2d8ceb" />
            <path d="M3.500 7h5M6 7v7" stroke="#16406c" />
          </svg>
          <span className="w-[2px] flex-1 bg-[#2d7cc8]/80" />
        </div>
      </div>
    </div>
  );
}

function Timeline() {
  return (
    <section className="flex shrink-0 flex-col border-t border-r-2 border-[#2a6cae] bg-[#232323]">
      <div className="flex h-[26px] shrink-0 items-center">
        <PanelTab className="ml-[22px]">渲染队列</PanelTab>
        <PanelTab className="ml-14 gap-[13px]">
          <span className="size-[11px] bg-[#ae9877]" /> 豆人
        </PanelTab>
        <PanelTab active className="ml-[42px] gap-[9px]">
          <X className="size-[7px]" />
          <span className="mr-1 size-[11px] bg-[#ae9877]" /> 合成1 <MenuIcon />
        </PanelTab>
      </div>
      <div className="-mt-px flex">
        <TimelineOutline />
        <TimelineTracks />
        <div className="flex w-[17px] shrink-0 flex-col items-center bg-[#1e1e1e] text-[#b4b4b4]">
          <div className="flex h-[60px] w-full flex-col items-center justify-end bg-[#232323] pb-1">
            <Icon className="h-[14px] w-3" box="0 0 12 14">
              <path d="M0 0h12v10l-6 4-6-4z" fill="currentColor" stroke="none" />
            </Icon>
          </div>
          <div className="flex h-[21px] items-center">
            <Icon className="h-[14px] w-[15px]" box="0 0 15 14">
              <path d="M7 2h8v8H8z" fill="currentColor" stroke="none" />
              <circle cx="6.5" cy="8.5" r="3.5" fill="#232323" />
              <path d="m0 8 7-6" strokeWidth="1.8" />
            </Icon>
          </div>
          <span className="h-[161px] w-4 rounded-full bg-[#333]" />
        </div>
      </div>
      <div className="flex h-3 items-start overflow-hidden border-t border-[#101010] pt-[2px] text-[#3f8ede]">
        <button aria-label="展开图层开关" className="w-[18px]">
          <Icon className="size-[14px]" box="0 0 14 14"><path d="M0 1h7v6M3 4h7v6M6 7h7v6H6zM0 1v9h4" /></Icon>
        </button>
        <button aria-label="展开转换控制" className="w-[18px]">
          <Icon className="size-[14px]" box="0 0 14 14"><circle cx="6" cy="5" r="4.5" /><path d="M6 5h7v7H6z" /></Icon>
        </button>
        <button aria-label="展开入点/出点" className="text-[#b0b0b0]">
          <Icon className="size-[14px]" box="0 0 14 14"><path d="M4 1h6v3l3 4-3 4v2H4v-2L1 8l3-4z" fill="currentColor" stroke="none" /></Icon>
        </button>
        <div className="ml-[749px] flex items-start pt-[2px] text-[#b0b0b0]">
          <Icon className="h-[7px] w-[10px]" box="0 0 10 8"><path d="m0 7 4-5 2 2 1-1 3 4z" fill="currentColor" stroke="none" /></Icon>
          <input
            type="range"
            aria-label="时间缩放"
            defaultValue={8}
            className="mx-2 h-[10px] w-[60px] appearance-none bg-transparent [&::-webkit-slider-runnable-track]:bg-transparent [&::-webkit-slider-thumb]:size-[10px] [&::-webkit-slider-thumb]:appearance-none [&::-webkit-slider-thumb]:rounded-full [&::-webkit-slider-thumb]:border-2 [&::-webkit-slider-thumb]:border-solid [&::-webkit-slider-thumb]:border-[#a0a0a0]"
          />
          <Icon className="h-[10px] w-4" box="0 0 16 10"><path d="m0 10 6-9 3 4 1-2 6 7z" fill="currentColor" stroke="none" /></Icon>
        </div>
      </div>
    </section>
  );
}

// ────────── Right column ──────────

const meterScale = ["0.0", "-3.0", "-6.0", "-9.0", "-12.0", "-15.0", "-18.0", "-21.0", "-24.0"];
const gainScale = ["12.0 dB", "9.0", "6.0", "3.0", "0.0 dB", "-3.0", "-6.0", "-9.0", "-12.0 dB"];

function Fader({ label, big = false }: { label: string; big?: boolean }) {
  return (
    <input
      type="range"
      aria-label={label}
      defaultValue={50}
      className={`w-[22px] shrink-0 appearance-none bg-transparent [writing-mode:vertical-lr] [&::-webkit-slider-runnable-track]:w-[2px] [&::-webkit-slider-runnable-track]:bg-[#3c3c3c] [&::-webkit-slider-thumb]:appearance-none [&::-webkit-slider-thumb]:rounded-full [&::-webkit-slider-thumb]:border-2 [&::-webkit-slider-thumb]:border-solid [&::-webkit-slider-thumb]:border-[#4a4a4a] [&::-webkit-slider-thumb]:bg-[#232323] [&::-webkit-slider-thumb]:shadow-[0_0_0_3px_#232323] ${
        big
          ? "h-[126px] [&::-webkit-slider-thumb]:-ml-[9px] [&::-webkit-slider-thumb]:size-5"
          : "h-[132px] [&::-webkit-slider-thumb]:-ml-[6px] [&::-webkit-slider-thumb]:size-[14px]"
      }`}
    />
  );
}

function AudioPanel() {
  return (
    <section className="flex h-[210px] shrink-0 flex-col bg-[#232323]">
      <div className="flex h-7 items-center gap-[10px] pl-[15px] text-[14px] leading-none text-[#c0c0c0]">
        音频 <MenuIcon />
      </div>
      <div className="flex pt-[9px] pl-[10px] text-[11px] leading-none text-[#a0a0a0]">
        <div className="w-7 shrink-0">
          <div className="h-[5px] border border-[#4a4a4a] bg-black" />
          <div className="mt-[2px] flex h-[161px] justify-center border border-[#4a4a4a] bg-linear-to-b from-[#74301f] via-[#1b5a1e] via-38% to-[#1c3320] to-75%">
            <span className="w-[2px] bg-[#111]" />
          </div>
        </div>
        <div className="mt-[8px] ml-[7px] flex h-[157px] w-7 flex-col justify-between">
          {meterScale.map((v) => (
            <span key={v} className={v === "0.0" ? "pl-[3px]" : ""}>{v}</span>
          ))}
        </div>
        <div className="ml-4 flex h-[156px] w-[72px] shrink-0 flex-col">
          <div className="mt-[12px] flex items-center gap-[3px]">
            <Fader label="左音量" />
            <Fader label="总音量" big />
            <Fader label="右音量" />
          </div>
          <div className="mt-[9px] flex justify-between px-[9px] text-[#444]">
            <span>0</span>
            <span>0</span>
          </div>
        </div>
        <div className="mt-[7px] ml-px flex h-[143px] flex-col justify-between whitespace-nowrap">
          {gainScale.map((v) => (
            <span key={v} className={v.startsWith("-") ? "" : "pl-[2px]"}>{v}</span>
          ))}
        </div>
      </div>
    </section>
  );
}

const transport = [
  { label: "第一帧", d: "M1 1v11M12 1v11L4 6.500z" },
  { label: "上一帧", d: "M8 1v11L0 6.500zM9.500 1v11M12 1v11" },
  { label: "播放", d: "M2 1v11l9-5.500z" },
  { label: "下一帧", d: "M1 1v11M3.500 1v11M5 1v11l8-5.500z" },
  { label: "最后一帧", d: "M12 1v11M1 1v11l8-5.500z" },
];

function PreviewPanel() {
  return (
    <section className="flex h-[59px] shrink-0 flex-col bg-[#232323]">
      <div className="flex h-7 items-center gap-[10px] pt-px pl-[15px] text-[14px] leading-none text-[#c0c0c0]">
        预览 <MenuIcon />
      </div>
      <div className="mt-[10px] flex gap-3 pl-[49px] text-[#b4b4b4]">
        {transport.map((t) => (
          <button key={t.label} aria-label={t.label}>
            <Icon className="size-[13px]" box="0 0 13 13">
              <path d={t.d} fill="currentColor" strokeWidth="1" />
            </Icon>
          </button>
        ))}
      </div>
    </section>
  );
}

const effectGroups = [
  "* 动画预设",
  "3D 声道",
  "Boris FX Mocha",
  "CINEMA 4D",
  "irrealix",
  "Keying",
  "Matte",
  "VE",
  "声道",
  "实用工具",
  "扭曲",
  "抠像",
  "文本",
  "时间",
];

function EffectsPanel() {
  return (
    <section className="flex min-h-0 flex-1 flex-col bg-[#232323]">
      <div className="flex h-[28px] shrink-0 items-center">
        <PanelTab active className="ml-3 gap-[10px] pl-[3px]">效果和预设 <MenuIcon /></PanelTab>
        <PanelTab className="ml-6">画笔</PanelTab>
        <span className="ml-[18px] h-6 w-px bg-[#2c2c2c]" />
      </div>
      <label className="mt-[5px] ml-[6px] flex h-[19px] shrink-0 items-center rounded-l-sm border border-r-0 border-[#2b2b2b] bg-[#151515] pl-[7px] text-[#b0b0b0]">
        <SearchIcon caret />
        <input aria-label="搜索效果" className="w-full bg-transparent text-[12px] outline-none" />
      </label>
      <div className="mt-[3px] flex min-h-0 flex-1 border-y border-[#0e0e0e]">
        <ul className="min-h-0 flex-1 overflow-hidden font-mono text-[#a4a4a4]">
          {effectGroups.map((g) => (
            <li key={g} className="h-[18px] border-b border-[#202020] bg-[#262626]">
              <button className={`flex h-full items-center gap-[3px] pt-px pl-1 leading-none ${/^[ -~]+$/.test(g) ? "text-[10px]" : "text-[11px]"}`}>
                <ChevronRight className="size-[11px]" />
                {g}
              </button>
            </li>
          ))}
        </ul>
        <div className="w-[3px] bg-[#1b1b1b]">
          <div className="mt-1 h-[116px] rounded-l-full bg-[#333]" />
        </div>
      </div>
      <div className="flex h-[18px] shrink-0 items-center justify-end pr-[10px] text-[#b0b0b0]">
        <button aria-label="新建动画预设">
          <Icon className="size-[13px]" box="0 0 13 13">
            <path d="M0 0h13v13H6V7H0zM0 8.500h4.500V13z" fill="currentColor" stroke="none" />
          </Icon>
        </button>
      </div>
    </section>
  );
}

const alignIcons = [
  { label: "左对齐", d: "M0 0h1v18H0zM3 2h8v6H3zM3 11h13v5H3z" },
  { label: "水平居中对齐", d: "M8 0h1v18H8zM4 2h9v6H4zM2 11h13v5H2z" },
  { label: "右对齐", d: "M15 0h1v18h-1zM5 2h8v6H5zM0 11h13v5H0z" },
  { label: "顶对齐", d: "M0 1h17v1H0zM2 4h5v13H2zM10 4h5v8h-5z" },
  { label: "垂直居中对齐", d: "M0 8h17v1H0zM3 2h5v14H3zM10 4h5v10h-5z" },
  { label: "底对齐", d: "M0 16h17v1H0zM3 2h5v13H3zM10 7h5v8h-5z" },
];

const distributeIcons = [
  { label: "按顶分布", d: "M0 1h17v1H0zM5 3h8v4H5zM0 10h17v1H0zM2 12h13v5H2z" },
  { label: "垂直均匀分布", d: "M0 4h17v1H0zM5 2h8v5H5zM0 13h17v1H0zM3 11h12v5H3z" },
  { label: "按底分布", d: "M0 7h17v1H0zM5 1h8v5H5zM0 16h17v1H0zM3 10h12v5H3z" },
  { label: "按左分布", d: "M0 0h1v18H0zM2 3h5v12H2zM10 0h1v18h-1zM12 5h4v8h-4z" },
  { label: "水平均匀分布", d: "M4 0h1v18H4zM2 3h5v12H2zM13 0h1v18h-1zM11 5h5v8h-5z" },
  { label: "按右分布", d: "M7 0h1v18H7zM1 3h5v12H1zM16 0h1v18h-1zM11 5h4v8h-4z" },
];

function IconStrip({ icons }: { icons: { label: string; d: string }[] }) {
  return (
    <div className="flex gap-[18px] overflow-hidden pl-[13px] text-[#424242]">
      {icons.map((i) => (
        <button key={i.label} aria-label={i.label} className="shrink-0">
          <Icon className="h-[18px] w-[17px]" box="0 0 17 18">
            <path d={i.d} fill="currentColor" stroke="none" />
          </Icon>
        </button>
      ))}
    </div>
  );
}

function AlignPanel() {
  return (
    <section className="flex h-[413px] shrink-0 flex-col bg-[#232323]">
      <div className="flex h-[28px] items-center">
        <PanelTab active className="ml-3 gap-[10px] pl-[3px]">对齐 <MenuIcon /></PanelTab>
        <PanelTab className="ml-6">绘画</PanelTab>
      </div>
      <div className="mt-[4px] flex h-[18px] items-center gap-1 pl-2 text-[14px] leading-none text-[#8e8e8e]">
        <label htmlFor="align-to" className="shrink-0">将图层对齐到:</label>
        <select id="align-to" disabled className="h-full w-full appearance-none bg-[#262626] pl-[6px] text-[#484848]">
          <option>选区</option>
        </select>
      </div>
      <div className="mt-[7px]"><IconStrip icons={alignIcons} /></div>
      <div className="mt-[6px] ml-[6px] h-[2px] bg-[#303030]" />
      <div className="mt-[2px] mb-[5px] pl-2 text-[14px] leading-[14px] text-[#8e8e8e]">分布图层:</div>
      <IconStrip icons={distributeIcons} />
    </section>
  );
}

export default function App() {
  return (
    <div className="flex h-screen w-full flex-col overflow-hidden bg-[#161616] font-['Noto_Sans','Noto_Sans_CJK_SC',sans-serif] [&_.font-mono]:font-['Liberation_Mono','Noto_Sans_CJK_SC',monospace] [&_.font-sans]:font-['Noto_Sans','Noto_Sans_CJK_SC',sans-serif]">
      <TitleBar />
      <Toolbar />
      <main className="flex min-h-0 flex-1 gap-1">
        <div className="flex min-w-0 flex-1 flex-col gap-1">
          <div className="flex min-h-0 flex-1 gap-1">
            <ProjectPanel />
            <CompositionViewer />
          </div>
          <Timeline />
        </div>
        <aside className="flex w-[201px] shrink-0 flex-col gap-1 overflow-hidden">
          <AudioPanel />
          <PreviewPanel />
          <EffectsPanel />
          <AlignPanel />
        </aside>
      </main>
    </div>
  );
}
